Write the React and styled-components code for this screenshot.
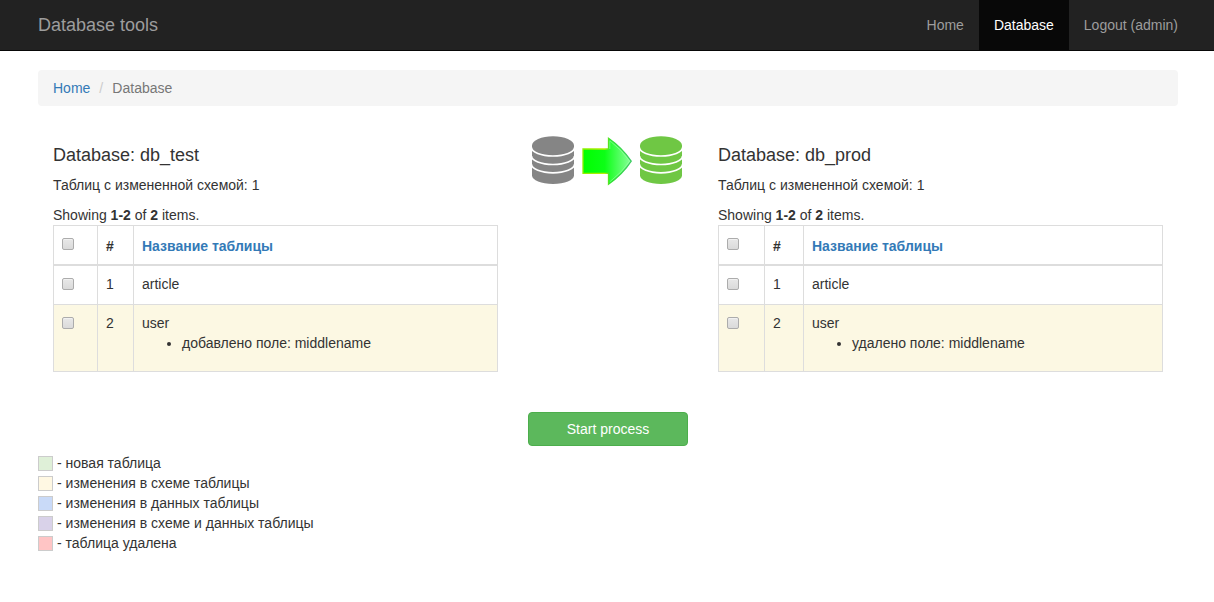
import React from "react";
import styled, { createGlobalStyle } from "styled-components";

const GlobalStyle = createGlobalStyle`
  *, *::before, *::after { box-sizing: border-box; }
  body {
    margin: 0;
    background: #fff;
    color: #333;
    font: 14px/20px "Liberation Sans", Arial, sans-serif;
    overflow: hidden;
  }
`;

const Navbar = styled.header`
  height: 51px;
  padding: 0 21px 0 38px;
  display: flex;
  justify-content: space-between;
  background: #222;
  border-bottom: 1px solid #080808;
`;

const Brand = styled.a`
  padding: 15px 0;
  font-size: 18px;
  color: #9d9d9d;
`;

const Nav = styled.nav`
  display: flex;
`;

const NavLink = styled.a`
  padding: 15px;
  color: ${(p) => (p.$active ? "#fff" : "#9d9d9d")};
  background: ${(p) => (p.$active ? "#080808" : "transparent")};
`;

const Container = styled.main`
  width: 1140px;
  margin: 19px 0 0 38px;
`;

const Breadcrumb = styled.div`
  height: 36px;
  padding: 8px 15px;
  display: flex;
  background: #f5f5f5;
  border-radius: 4px;
  color: #777;
`;

const Link = styled.a`
  color: #337ab7;
`;

const Slash = styled.span`
  width: 22px;
  padding-left: 9px;
  color: #ccc;
`;

const Columns = styled.div`
  margin-top: 29px;
  display: grid;
  grid-template-columns: 475px 190px 475px;
`;

const Column = styled.section`
  padding: 0 15px;
`;

const Title = styled.h4`
  margin: 10px 0;
  font-size: 18px;
  font-weight: 400;
  line-height: 20px;
`;

const Info = styled.p`
  margin: 0 0 10px;
`;

const Summary = styled.div`
  height: 20px;
`;

const Table = styled.div`
  border: 1px solid #ddd;
`;

const Row = styled.div`
  display: grid;
  grid-template-columns: ${(p) => p.$cols};
  height: ${(p) => p.$height}px;
  background: ${(p) => (p.$changed ? "#fcf8e3" : "#fff")};
  border-bottom: ${(p) => p.$line || 0}px solid #ddd;
`;

const Cell = styled.div`
  padding: ${(p) => (p.$head ? 10 : 8)}px 8px 0;
  font-weight: ${(p) => (p.$head ? 700 : 400)};
  & + & { border-left: 1px solid #ddd; }
`;

const CheckCell = styled.div`
  padding: 12px 8px 0;
  border-right: 1px solid #ddd;
`;

const Checkbox = styled.input.attrs({ type: "checkbox" })`
  appearance: none;
  display: block;
  width: 12px;
  height: 12px;
  margin: 0;
  border: 1px solid #acacac;
  border-radius: 2px;
  background: linear-gradient(#e8e8e8, #dadada);
  box-shadow: inset 0 1px 0 #f1f1f1;
`;

const Changes = styled.ul`
  margin: 0;
  padding-left: 40px;
`;

const Center = styled.div`
  display: flex;
  flex-direction: column;
  align-items: stretch;
  justify-content: space-between;
  height: 311px;
  padding: 0 15px;
`;

const Picture = styled.svg`
  display: block;
  width: 160px;
  height: 52px;
`;

const Button = styled.button`
  height: 34px;
  border: 1px solid #4cae4c;
  border-radius: 4px;
  background: #5cb85c;
  color: #fff;
  font: inherit;
`;

const Legend = styled.div`
  margin-top: 7px;
`;

const LegendRow = styled.div`
  display: flex;
  align-items: center;
  gap: 4px;
  height: 20px;
`;

const Swatch = styled.span`
  width: 15px;
  height: 15px;
  margin-top: 1px;
  border: 1px solid #ccc;
  background: ${(p) => p.$color};
`;

const legend = [
  ["#dff0d8", "новая таблица"],
  ["#fff8e3", "изменения в схеме таблицы"],
  ["#c9daf8", "изменения в данных таблицы"],
  ["#d9d2e9", "изменения в схеме и данных таблицы"],
  ["#ffc5c5", "таблица удалена"],
];

function Cylinder({ x, color }) {
  return (
    <g transform={`translate(${x} 1)`}>
      <path d="M0 9.500v30c0 4.700 9.400 8.500 21 8.500s21-3.800 21-8.500v-30z" fill={color} />
      <ellipse cx="21" cy="9.700" rx="21" ry="9.400" fill={color} />
      <path
        d="M-.5 11.500A21.500 8.500 0 0 0 42.500 11.500M-.5 20A21.500 8.500 0 0 0 42.500 20M-.5 28.300A21.500 8.500 0 0 0 42.500 28.300"
        fill="none"
        stroke="#fff"
        strokeWidth="1.700"
      />
    </g>
  );
}

function TransferPicture() {
  return (
    <Picture viewBox="0 0 160 52">
      <defs>
        <linearGradient id="arrowFill" x1="0" x2="1">
          <stop offset="0" stopColor="#00ff00" />
          <stop offset=".45" stopColor="#0cff16" />
          <stop offset="1" stopColor="#8aff9b" />
        </linearGradient>
        <linearGradient id="arrowEdge" x1="0" x2="1">
          <stop offset="0" stopColor="#8df000" />
          <stop offset=".45" stopColor="#b8ee00" />
          <stop offset=".56" stopColor="#30df30" />
          <stop offset="1" stopColor="#3cca62" />
        </linearGradient>
      </defs>
      <Cylinder x={4} color="#858585" />
      <path
        d="M55 14h25.500V3.200Q94.500 13 103.200 26.200Q94.500 39.500 80.500 49.200V38.400H55z"
        fill="url(#arrowFill)"
        stroke="url(#arrowEdge)"
        strokeWidth="1.300"
      />
      <path
        d="M81.800 14V5.700Q93.500 14.500 101.700 26.200Q93.500 38 81.800 46.800"
        fill="none"
        stroke="#a6ffad"
        strokeWidth=".8"
        opacity=".7"
      />
      <Cylinder x={112} color="#6fc744" />
    </Picture>
  );
}

function DatabasePanel({ name, cols, change }) {
  return (
    <Column>
      <Title>Database: {name}</Title>
      <Info>Таблиц с измененной схемой: 1</Info>
      <Summary>
        Showing <b>1-2</b> of <b>2</b> items.
      </Summary>
      <Table>
        <Row $cols={cols} $height={40} $line={2}>
          <CheckCell><Checkbox /></CheckCell>
          <Cell $head>#</Cell>
          <Cell $head><Link>Название таблицы</Link></Cell>
        </Row>
        <Row $cols={cols} $height={39} $line={1}>
          <CheckCell><Checkbox /></CheckCell>
          <Cell>1</Cell>
          <Cell>article</Cell>
        </Row>
        <Row $cols={cols} $height={66} $changed>
          <CheckCell><Checkbox /></CheckCell>
          <Cell>2</Cell>
          <Cell>
            user
            <Changes><li>{change}</li></Changes>
          </Cell>
        </Row>
      </Table>
    </Column>
  );
}

export default function App() {
  return (
    <>
      <GlobalStyle />
      <Navbar>
        <Brand>Database tools</Brand>
        <Nav>
          <NavLink>Home</NavLink>
          <NavLink $active>Database</NavLink>
          <NavLink>Logout (admin)</NavLink>
        </Nav>
      </Navbar>
      <Container>
        <Breadcrumb>
          <Link>Home</Link>
          <Slash>/</Slash>
          <span>Database</span>
        </Breadcrumb>
        <Columns>
          <DatabasePanel name="db_test" cols="44px 35px 1fr" change="добавлено поле: middlename" />
          <Center>
            <TransferPicture />
            <Button>Start process</Button>
          </Center>
          <DatabasePanel name="db_prod" cols="46px 38px 1fr" change="удалено поле: middlename" />
        </Columns>
        <Legend>
          {legend.map(([color, label]) => (
            <LegendRow key={label}>
              <Swatch $color={color} />
              <span>- {label}</span>
            </LegendRow>
          ))}
        </Legend>
      </Container>
    </>
  );
}
